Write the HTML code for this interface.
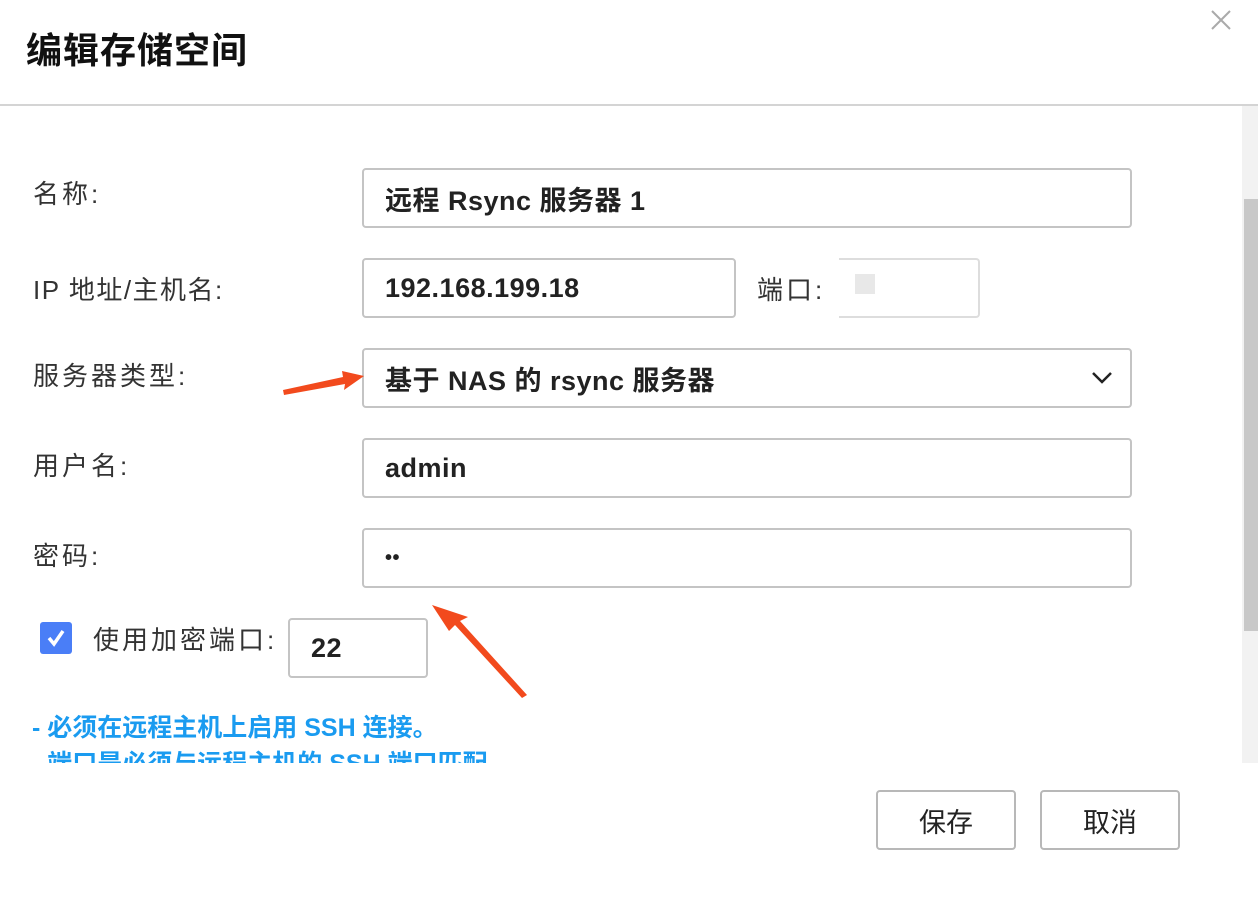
<!DOCTYPE html>
<html><head><meta charset="utf-8"><style>
*{margin:0;padding:0;box-sizing:border-box}
body{width:1258px;height:898px;background:#fff;position:relative;overflow:hidden;font-family:"Liberation Sans","Noto Sans CJK SC",sans-serif;color:#222}
.abs{position:absolute}
.title{left:26px;top:22px;font-size:36px;font-weight:bold;color:#111;letter-spacing:1px}
.hr{left:0;top:104px;width:1258px;height:2px;background:#d4d4d4}
.track{left:1242px;top:106px;width:16px;height:657px;background:#f2f2f2}
.thumb{left:1244px;top:199px;width:14px;height:432px;background:#c8c8c8}
.lbl{font-size:26px;color:#333;letter-spacing:3px;white-space:nowrap}
.inp{border:2px solid #c4c4c4;border-radius:4px;background:#fff;font-size:27px;letter-spacing:0.5px;font-weight:bold;color:#222;padding-left:21px;display:flex;align-items:center;white-space:nowrap}
.btn{border:2px solid #b8b8b8;border-radius:4px;font-size:27px;display:flex;align-items:center;justify-content:center;color:#222}
.note{left:32px;font-size:25px;font-weight:bold;color:#1a9bf0;white-space:nowrap}
</style></head><body>
<div class="abs title">编辑存储空间</div>
<svg class="abs" style="left:1210px;top:9px" width="22" height="22"><path d="M2 2L20 20M20 2L2 20" stroke="#aaa" stroke-width="2"/></svg>
<div class="abs hr"></div>
<div class="abs track"></div><div class="abs thumb"></div>

<div class="abs lbl" style="left:33px;top:174px">名称:</div>
<div class="abs inp" style="left:362px;top:168px;width:770px;height:60px">远程 Rsync 服务器 1</div>

<div class="abs lbl" style="left:33px;top:270px;letter-spacing:1.5px">IP 地址/主机名:</div>
<div class="abs inp" style="left:362px;top:258px;width:374px;height:60px">192.168.199.18</div>
<div class="abs lbl" style="left:757px;top:270px">端口:</div>
<div class="abs" style="left:839px;top:258px;width:141px;height:60px;border:2px solid #ddd;border-left:none;border-radius:0 4px 4px 0"></div>
<div class="abs" style="left:855px;top:274px;width:20px;height:20px;background:#e8e8e8"></div>

<div class="abs lbl" style="left:33px;top:356px">服务器类型:</div>
<div class="abs inp" style="left:362px;top:348px;width:770px;height:60px">基于 NAS 的 rsync 服务器</div>
<svg class="abs" style="left:1090px;top:370px" width="24" height="16"><path d="M3 3L12 12L21 3" stroke="#222" stroke-width="2.5" fill="none"/></svg>

<div class="abs lbl" style="left:33px;top:446px">用户名:</div>
<div class="abs inp" style="left:362px;top:438px;width:770px;height:60px">admin</div>

<div class="abs lbl" style="left:33px;top:536px">密码:</div>
<div class="abs inp" style="left:362px;top:528px;width:770px;height:60px;font-size:20px">••</div>

<div class="abs" style="left:40px;top:622px;width:32px;height:32px;background:#4a7ef7;border-radius:3px"></div>
<svg class="abs" style="left:40px;top:622px" width="32" height="32"><path d="M9 16L14 22L23 9" stroke="#fff" stroke-width="3.5" fill="none"/></svg>
<div class="abs lbl" style="left:93px;top:620px">使用加密端口:</div>
<div class="abs inp" style="left:288px;top:618px;width:140px;height:60px">22</div>

<div class="abs note" style="top:708px">- 必须在远程主机上启用 SSH 连接。</div>
<div class="abs" style="left:0;top:744px;width:1242px;height:19px;overflow:hidden"><div class="note" style="position:absolute;top:0px;left:32px">- 端口是必须与远程主机的 SSH 端口匹配</div></div>

<div class="abs btn" style="left:876px;top:790px;width:140px;height:60px">保存</div>
<div class="abs btn" style="left:1040px;top:790px;width:140px;height:60px">取消</div>

<svg class="abs" style="left:0;top:0" width="1258" height="898">
<path d="M284 395L345 384L344 390L364 376L342 371L343 377L283 390Z" fill="#f24a1d"/>
<path d="M432 605L468 617L460 621L527 695L522 698L455 625L449 631Z" fill="#f24a1d"/>
</svg>
</body></html>
